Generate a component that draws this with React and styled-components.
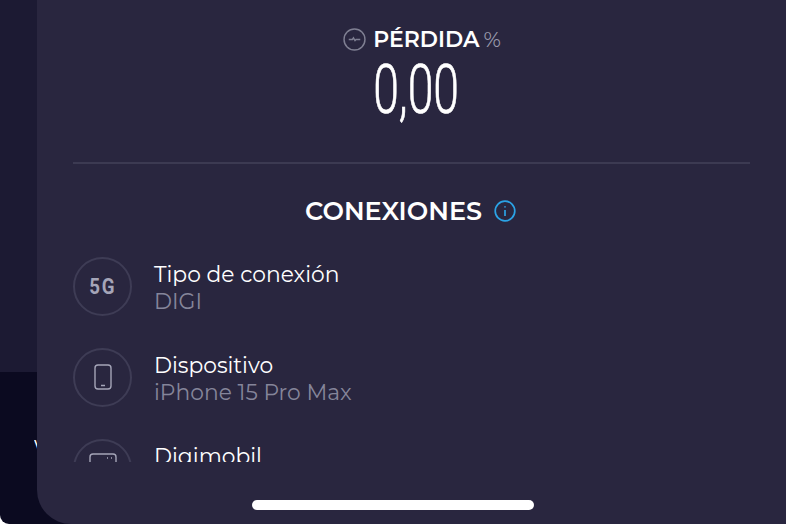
import styled, { createGlobalStyle } from "styled-components";

const GlobalStyle = createGlobalStyle`
  html, body, #root {
    margin: 0;
    padding: 0;
    width: 786px;
    height: 524px;
    overflow: hidden;
    background: #fff;
  }
  * { box-sizing: border-box; }
`;

const connections = [
  { title: "Tipo de conexión", value: "DIGI", icon: <FiveG /> },
  { title: "Dispositivo", value: "iPhone 15 Pro Max", icon: <PhoneIcon /> },
  { title: "Digimobil", value: "", icon: <CarrierIcon /> },
];

function FiveG() {
  return <FiveGLabel>5G</FiveGLabel>;
}

function PhoneIcon() {
  return (
    <svg width="18" height="26" viewBox="0 0 18 26" fill="none" stroke="#a5a5b8" strokeWidth="1.4">
      <rect x="1" y="1" width="16" height="24" rx="3" />
      <path d="M7 21.5h4" />
    </svg>
  );
}

function CarrierIcon() {
  return (
    <svg width="28" height="30" viewBox="0 0 28 30" fill="none" stroke="#a5a5b8" strokeWidth="1.4">
      <rect x="1" y="1" width="26" height="28" rx="3" />
      <path d="M18 5h1M22 5h1" />
    </svg>
  );
}

function LossIcon() {
  return (
    <svg width="23" height="23" viewBox="0 0 22 22" fill="none" stroke="#7f7f92" strokeWidth="1.4">
      <circle cx="11" cy="11" r="10" />
      <path d="M5.5 11h3.5l1-1.5 1.5 2.5 1-1h4" />
    </svg>
  );
}

function InfoIcon() {
  return (
    <svg width="22" height="22" viewBox="0 0 22 22" fill="none" stroke="#2ba3e6" strokeWidth="1.7">
      <circle cx="11" cy="11" r="9.8" />
      <path d="M11 10v6" />
      <path d="M11 6.2v1.4" />
    </svg>
  );
}

export default function App() {
  return (
    <>
      <GlobalStyle />
      <Screen>
        <Sidebar>
          <SidebarTop />
          <SidebarBottom>
            <PeekLetter>V</PeekLetter>
          </SidebarBottom>
        </Sidebar>
        <Sheet>
          <LossBlock>
            <LossHeading>
              <LossIcon />
              <LossTitle>PÉRDIDA</LossTitle>
              <LossUnit>%</LossUnit>
            </LossHeading>
            <LossValue>0,00</LossValue>
          </LossBlock>
          <Divider />
          <SectionHeading>
            <SectionTitle>CONEXIONES</SectionTitle>
            <InfoIcon />
          </SectionHeading>
          <ConnectionList>
            {connections.map((item) => (
              <ConnectionRow key={item.title}>
                <IconCircle>{item.icon}</IconCircle>
                <ConnectionText>
                  <ConnectionTitle>{item.title}</ConnectionTitle>
                  <ConnectionValue>{item.value}</ConnectionValue>
                </ConnectionText>
              </ConnectionRow>
            ))}
          </ConnectionList>
          <HomeBar />
        </Sheet>
      </Screen>
    </>
  );
}

const Screen = styled.div`
  position: relative;
  width: 786px;
  height: 524px;
  display: flex;
  overflow: hidden;
  border-bottom-left-radius: 9px;
  background: #0b0a20;
`;

const Sidebar = styled.div`
  width: 37px;
  flex-shrink: 0;
  display: flex;
  flex-direction: column;
`;

const SidebarTop = styled.div`
  height: 372px;
  background: #1c1a33;
`;

const SidebarBottom = styled.div`
  flex: 1;
  display: flex;
  justify-content: flex-end;
  padding-top: 66px;
  overflow: hidden;
`;

const PeekLetter = styled.span`
  width: 3px;
  overflow: hidden;
  font-family: "Liberation Sans", sans-serif;
  font-size: 16px;
  color: #fff;
`;

const Sheet = styled.div`
  flex: 1;
  height: 524px;
  display: flex;
  flex-direction: column;
  align-items: stretch;
  padding: 0 36px 0 36px;
  background: #29263f;
  border-bottom-left-radius: 34px;
  font-family: Montserrat, "Noto Sans", sans-serif;
  color: #fff;
  overflow: hidden;
`;

const LossBlock = styled.div`
  height: 162px;
  padding-top: 28px;
  display: flex;
  flex-direction: column;
  align-items: center;
`;

const LossHeading = styled.div`
  display: flex;
  align-items: center;
  gap: 7px;
  height: 22px;
  margin-left: 21px;
`;

const LossTitle = styled.span`
  font-size: 22px;
  font-weight: 600;
`;

const LossUnit = styled.span`
  margin-left: -3px;
  font-size: 21px;
  color: #9a9aac;
`;

const LossValue = styled.div`
  margin-top: 5px;
  margin-left: 10px;
  font-family: "Roboto", sans-serif;
  font-size: 69px;
  font-weight: 300;
  line-height: 70px;
  -webkit-text-stroke: 0.7px #fff;
  transform: scaleX(0.67);
`;

const Divider = styled.div`
  height: 2px;
  background: #3c3a52;
`;

const SectionHeading = styled.div`
  height: 27px;
  margin: 33px 0 32px;
  display: flex;
  align-items: center;
  justify-content: center;
  gap: 12px;
  flex-shrink: 0;
  padding-right: 2px;
`;

const SectionTitle = styled.h2`
  margin: 0;
  font-size: 25.5px;
  line-height: 28px;
  font-weight: 600;
`;

const ConnectionList = styled.div`
  display: flex;
  flex-direction: column;
  gap: 31px;
  height: 206px;
  overflow: hidden;
  flex-shrink: 0;
`;

const ConnectionRow = styled.div`
  display: flex;
  align-items: center;
  gap: 22px;
  height: 60px;
  flex-shrink: 0;
`;

const IconCircle = styled.div`
  width: 59px;
  height: 59px;
  flex-shrink: 0;
  display: flex;
  align-items: center;
  justify-content: center;
  border-radius: 50%;
  border: 2px solid #3e3c55;
`;

const FiveGLabel = styled.span`
  font-family: "Roboto", sans-serif;
  font-size: 22px;
  font-weight: 700;
  letter-spacing: 2px;
  color: #a5a5b8;
  transform: scaleX(0.85);
`;

const ConnectionText = styled.div`
  display: flex;
  flex-direction: column;
  padding-top: 4px;
`;

const ConnectionTitle = styled.div`
  font-size: 21.8px;
  line-height: 27px;
  color: #fff;
`;

const ConnectionValue = styled.div`
  min-height: 27px;
  font-size: 21.8px;
  line-height: 27px;
  color: #85859a;
`;

const HomeBar = styled.div`
  position: absolute;
  left: 252px;
  top: 500px;
  width: 282px;
  height: 10px;
  border-radius: 5px;
  background: #fff;
`;
